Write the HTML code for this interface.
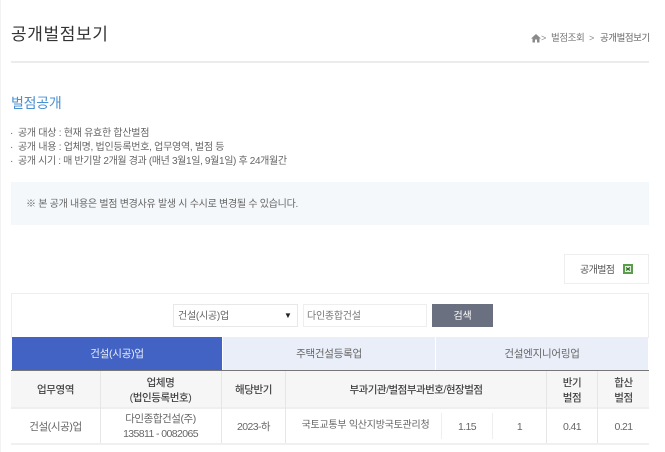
<!DOCTYPE html>
<html lang="ko"><head><meta charset="utf-8"><style>
html,body{margin:0;padding:0;background:#fff}
body{width:665px;height:452px;overflow:hidden;position:relative;font-family:"Liberation Sans","Noto Sans CJK KR",sans-serif;color:#555;letter-spacing:-.25px}
div,svg{position:absolute;box-sizing:border-box}
.t{white-space:nowrap;line-height:14px;height:14px}
.c{text-align:center}
.b{font-weight:500;color:#444;letter-spacing:-.4px}
.n{letter-spacing:-.6px}
</style></head><body>
<div style="left:0;top:0;width:1px;height:452px;background:#f2f2f2"></div>
<div class="t" style="left:11px;top:24px;height:22px;line-height:22px;font-size:17px;color:#333;letter-spacing:.6px">공개벌점보기</div>
<svg style="left:531px;top:33px" width="10" height="10" viewBox="0 0 10 10"><path d="M5 1L0 5.500h1.500V9.500h2.500V6.500h2V9.500h2.500V5.500H10z" fill="#8a8a8a"/></svg>
<div class="t" style="left:541px;top:31px;font-size:9px;color:#888">&gt;</div>
<div class="t" style="left:551px;top:32px;font-size:9.500px;color:#777;letter-spacing:-.4px">벌점조회</div>
<div class="t" style="left:589px;top:31px;font-size:9px;color:#888">&gt;</div>
<div class="t" style="left:600px;top:32px;font-size:9.500px;color:#666;letter-spacing:-.45px">공개벌점보기</div>
<div style="left:11px;top:61px;width:638px;height:2px;background:#ececec"></div>
<div class="t" style="left:11px;top:95px;height:16px;line-height:16px;font-size:14px;color:#4a90d2">벌점공개</div>
<div class="t" style="left:10px;top:127px;font-size:10px;color:#666">·</div>
<div class="t" style="left:18px;top:127px;font-size:10px;color:#666;letter-spacing:-.27px">공개 대상 : 현재 유효한 합산벌점</div>
<div class="t" style="left:10px;top:141px;font-size:10px;color:#666">·</div>
<div class="t" style="left:18px;top:141px;font-size:10px;color:#666;letter-spacing:-.27px">공개 내용 : 업체명, 법인등록번호, 업무영역, 벌점 등</div>
<div class="t" style="left:10px;top:155px;font-size:10px;color:#666">·</div>
<div class="t" style="left:18px;top:155px;font-size:10px;color:#666;letter-spacing:-.35px">공개 시기 : 매 반기말 2개월 경과 (매년 3월1일, 9월1일) 후 24개월간</div>
<div style="left:11px;top:182px;width:638px;height:43px;background:#f4f8fb"></div>
<div class="t" style="left:26px;top:198px;font-size:10px;color:#666;letter-spacing:-.27px">※ 본 공개 내용은 벌점 변경사유 발생 시 수시로 변경될 수 있습니다.</div>
<div style="left:564px;top:254px;width:85px;height:30px;border:1px solid #eee;background:#fff"></div>
<div class="t" style="left:580px;top:264px;font-size:10px;color:#555;letter-spacing:-.6px">공개벌점</div>
<div style="left:623px;top:264px;width:10px;height:10px;border:2px solid #5a9e4b;background:#e8f2e4"></div>
<svg style="left:625px;top:266px" width="6" height="6" viewBox="0 0 6 6"><path d="M1 1.500L5 4.500M5 1.500L1 4.500" stroke="#2f6b27" stroke-width="1.200"/></svg>
<div style="left:11px;top:293px;width:638px;height:45px;border:1px solid #eee;border-bottom:0"></div>
<div style="left:173px;top:304px;width:125px;height:23px;border:1px solid #e8e8e8"></div>
<div class="t" style="left:178px;top:310px;font-size:10px;color:#666">건설(시공)업</div>
<div class="t" style="left:284px;top:309px;font-size:8px;color:#222">▼</div>
<div style="left:303px;top:304px;width:124px;height:23px;border:1px solid #eee"></div>
<div class="t" style="left:307px;top:310px;font-size:10px;color:#777">다인종합건설</div>
<div class="t c" style="left:432px;top:304px;width:61px;height:23px;line-height:25px;background:#6b7080;color:#fff;font-size:10px">검색</div>
<div class="t c" style="left:12px;top:337px;width:210px;height:34px;line-height:35px;background:#4263c4;color:#e8edf8;font-size:10.500px">건설(시공)업</div>
<div class="t c" style="left:223px;top:337px;width:212px;height:34px;line-height:35px;background:#e9eef8;color:#666;font-size:10.500px">주택건설등록업</div>
<div class="t c" style="left:436px;top:337px;width:212px;height:34px;line-height:35px;background:#e9eef8;color:#666;font-size:10.500px">건설엔지니어링업</div>
<div style="left:11px;top:370px;width:638px;height:1px;background:#777"></div>
<div style="left:11px;top:371px;width:638px;height:36px;background:#f6f6f6"></div>
<div style="left:11px;top:407px;width:638px;height:2px;background:#efefef"></div>
<div style="left:11px;top:443px;width:638px;height:2px;background:#f0f0f0"></div>
<div style="left:100px;top:371px;width:1px;height:72px;background:#e6e6e6"></div>
<div style="left:221px;top:371px;width:1px;height:72px;background:#e6e6e6"></div>
<div style="left:285px;top:371px;width:1px;height:72px;background:#e6e6e6"></div>
<div style="left:546px;top:371px;width:1px;height:72px;background:#e6e6e6"></div>
<div style="left:597px;top:371px;width:1px;height:72px;background:#e6e6e6"></div>
<div style="left:441px;top:413px;width:1px;height:26px;background:#eee"></div>
<div style="left:492px;top:413px;width:1px;height:26px;background:#eee"></div>
<div class="t c b" style="left:11px;top:383px;width:89px;font-size:10.500px">업무영역</div>
<div class="t c b" style="left:100px;top:376px;width:121px;font-size:10.500px">업체명</div>
<div class="t c b" style="left:100px;top:391px;width:121px;font-size:10.500px">(법인등록번호)</div>
<div class="t c b" style="left:222px;top:383px;width:63px;font-size:10.500px">해당반기</div>
<div class="t c b" style="left:286px;top:383px;width:260px;font-size:10.500px;letter-spacing:-.5px">부과기관/벌점부과번호/현장벌점</div>
<div class="t c b" style="left:547px;top:376px;width:50px;font-size:10.500px">반기</div>
<div class="t c b" style="left:547px;top:391px;width:50px;font-size:10.500px">벌점</div>
<div class="t c b" style="left:598px;top:376px;width:51px;font-size:10.500px">합산</div>
<div class="t c b" style="left:598px;top:391px;width:51px;font-size:10.500px">벌점</div>
<div class="t c" style="left:11px;top:420px;width:89px;font-size:10.500px;color:#666;letter-spacing:-.4px">건설(시공)업</div>
<div class="t c" style="left:100px;top:412px;width:121px;font-size:10.500px;color:#666;letter-spacing:-.45px">다인종합건설(주)</div>
<div class="t c n" style="left:100px;top:427px;width:121px;font-size:10.500px;color:#666">135811 - 0082065</div>
<div class="t c n" style="left:222px;top:420px;width:63px;font-size:10.500px;color:#666">2023-하</div>
<div class="t c" style="left:288px;top:419px;width:155px;font-size:10px;color:#666">국토교통부 익산지방국토관리청</div>
<div class="t c n" style="left:442px;top:420px;width:50px;font-size:10.500px;color:#666">1.15</div>
<div class="t c n" style="left:493px;top:420px;width:53px;font-size:10.500px;color:#666">1</div>
<div class="t c n" style="left:547px;top:420px;width:50px;font-size:10.500px;color:#666">0.41</div>
<div class="t c n" style="left:598px;top:420px;width:51px;font-size:10.500px;color:#666">0.21</div>
</body></html>
